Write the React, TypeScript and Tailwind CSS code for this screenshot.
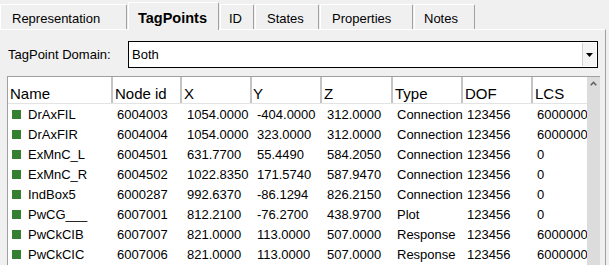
import React from 'react';

const tabs = [
  { label: 'Representation', cls: 'w-[127px] pl-[11px]' },
  { label: 'TagPoints', cls: 'w-[91px] pl-[9px]', active: true },
  { label: 'ID', cls: 'w-[34px] pl-[8px]' },
  { label: 'States', cls: 'w-[64px] pl-[11px]' },
  { label: 'Properties', cls: 'w-[93px] pl-[11px]' },
  { label: 'Notes', cls: 'w-[61px] pl-[9px]' },
];

const columns = [
  { title: 'Name', cls: 'pl-[2px]' },
  { title: 'Node id', cls: 'pl-[2px]' },
  { title: 'X', cls: 'pl-[2px]' },
  { title: 'Y', cls: 'pl-[1px]' },
  { title: 'Z', cls: 'pl-[2px]' },
  { title: 'Type', cls: 'pl-[2px]' },
  { title: 'DOF', cls: 'pl-[2px]' },
  { title: 'LCS', cls: 'pl-[2px]' },
];

const rows = [
  ['DrAxFIL', '6004003', '1054.0000', '-404.0000', '312.0000', 'Connection', '123456', '6000000'],
  ['DrAxFIR', '6004004', '1054.0000', '323.0000', '312.0000', 'Connection', '123456', '6000000'],
  ['ExMnC_L', '6004501', '631.7700', '55.4490', '584.2050', 'Connection', '123456', '0'],
  ['ExMnC_R', '6004502', '1022.8350', '171.5740', '587.9470', 'Connection', '123456', '0'],
  ['IndBox5', '6000287', '992.6370', '-86.1294', '826.2150', 'Connection', '123456', '0'],
  ['PwCG___', '6007001', '812.2100', '-76.2700', '438.9700', 'Plot', '123456', '0'],
  ['PwCkCIB', '6007007', '821.0000', '113.0000', '507.0000', 'Response', '123456', '6000000'],
  ['PwCkCIC', '6007006', '821.0000', '113.0000', '507.0000', 'Response', '123456', '6000000'],
];

// per-column left padding for body cells
const cellPad = ['pl-[4px]', 'pl-[4px]', 'pl-[5px]', 'pl-[5px]', 'pl-[5px]', 'pl-[4px]', 'pl-[4px]', 'pl-[4px]'];

const gridCols = 'grid grid-cols-[105px_69px_70px_70px_71px_70px_70px_54px]';

const App: React.FC = () => {
  return (
    <div
      className="w-[609px] h-[265px] overflow-hidden bg-[#f0f0f0] flex flex-col text-black"
      style={{ fontFamily: '"Liberation Sans", Arial, sans-serif' }}
    >
      {/* tab strip */}
      <div className="h-[29px] flex items-end gap-[1px] shrink-0">
        {tabs.map((t) =>
          t.active ? (
            <div
              key={t.label}
              className={`${t.cls} relative z-10 -mb-[1px] h-[28px] pt-[4px] flex items-center bg-[#f0f0f0] border-l border-t border-r border-l-white border-t-white border-r-[#a0a0a0] rounded-tr-[2px] text-[14.5px] font-bold leading-none`}
            >
              {t.label}
            </div>
          ) : (
            <div
              key={t.label}
              className={`${t.cls} h-[25px] pt-[3px] flex items-center border-l border-t border-r border-l-white border-t-white border-r-[#a0a0a0] rounded-tr-[2px] text-[13px] leading-none`}
            >
              {t.label}
            </div>
          )
        )}
      </div>

      {/* panel */}
      <div className="flex-1 w-[606px] border-t border-r border-t-white border-r-[#a0a0a0] pt-[11px] flex flex-col">
        <div className="flex items-center h-[27px]">
          <div className="w-[128px] pl-[8px] text-[13px] leading-none">TagPoint Domain:</div>
          <div className="w-[470px] h-[27px] border border-black bg-white flex items-stretch">
            <div className="flex-1 flex items-center pl-[3px] text-[13px] leading-none">Both</div>
            <div className="w-[14px] my-[1px] mr-[1px] border-l border-[#d0d0d0] bg-[#f4f4f4] flex items-center justify-center">
              <svg width="7" height="4" viewBox="0 0 7 4">
                <polygon points="0,0 7,0 3.5,4" fill="#000" />
              </svg>
            </div>
          </div>
        </div>

        {/* table */}
        <div className="mt-[8px] ml-[7px] flex flex-1 min-h-0">
          <div className="w-[580px] border-l border-t border-[#a0a0a0] bg-white flex flex-col overflow-hidden">
            <div className={`${gridCols} h-[27px] border-b border-[#e3e3e3] shrink-0`}>
              {columns.map((c, i) => (
                <div
                  key={c.title}
                  className={`${c.cls} ${i < 7 ? 'border-r-2 border-[#c4c4c4]' : ''} flex items-center pt-[6px] text-[15px] leading-none whitespace-nowrap overflow-hidden`}
                >
                  {c.title}
                </div>
              ))}
            </div>
            {rows.map((r) => (
              <div key={r[0]} className={`${gridCols} h-[20px] shrink-0`}>
                {r.map((v, i) =>
                  i === 0 ? (
                    <div key={i} className="pl-[4px] flex items-center gap-[7px] text-[13px] leading-none whitespace-nowrap overflow-hidden">
                      <span className="w-[9px] h-[9px] bg-[#357f31] shrink-0" />
                      {v}
                    </div>
                  ) : (
                    <div key={i} className={`${cellPad[i]} flex items-center text-[13px] leading-none whitespace-nowrap overflow-hidden`}>
                      {v}
                    </div>
                  )
                )}
              </div>
            ))}
          </div>
          {/* vertical scrollbar */}
          <div className="w-[13px] border-t border-[#a0a0a0] bg-[#dcdcdc] flex justify-center pt-[4px]">
            <svg width="7" height="5" viewBox="0 0 7 5">
              <polyline points="0.8,4.2 3.5,1.3 6.2,4.2" fill="none" stroke="#5f5f5f" strokeWidth="1.6" />
            </svg>
          </div>
        </div>
      </div>
    </div>
  );
};

export default App;
